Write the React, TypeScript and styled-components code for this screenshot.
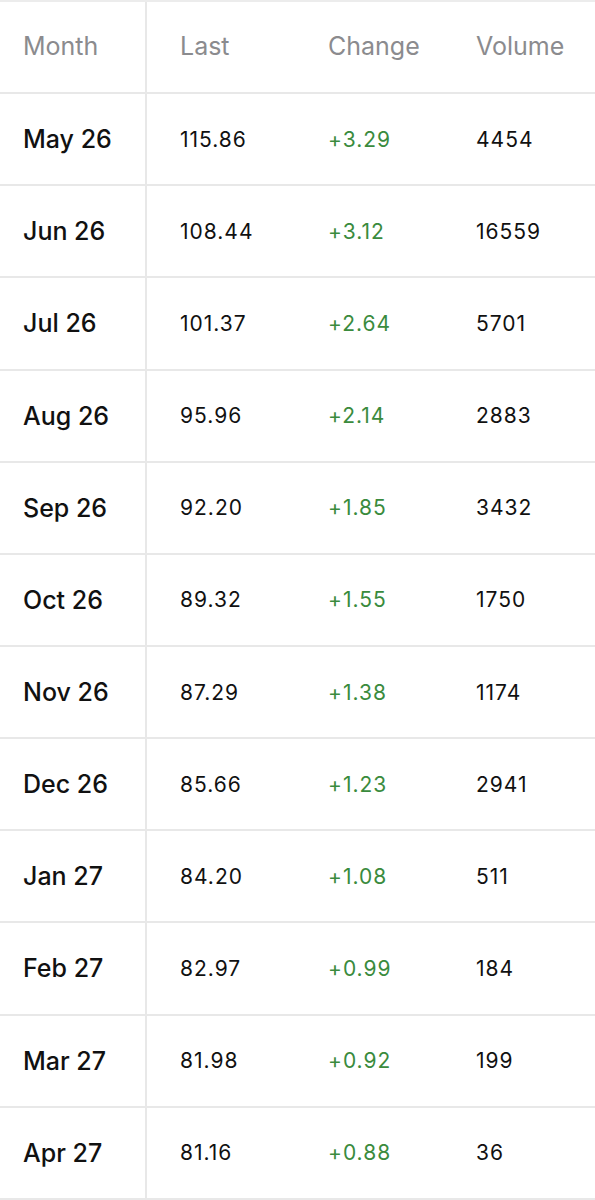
import React from "react";
import styled, { createGlobalStyle } from "styled-components";

const GlobalStyle = createGlobalStyle`
  body {
    margin: 0;
    background: #ffffff;
    font-family: Inter, "Liberation Sans", sans-serif;
  }
`;

const Table = styled.div`
  width: 595px;
  border-top: 2px solid #ececec;
`;

const Row = styled.div`
  display: grid;
  grid-template-columns: 147px 148px 148px 1fr;
  height: 92.15px;
  box-sizing: border-box;
  border-bottom: 2px solid #e8e8e8;
`;

const Cell = styled.div<{ $first?: boolean; $head?: boolean; $green?: boolean }>`
  display: flex;
  align-items: center;
  box-sizing: border-box;
  padding-left: ${(p) => (p.$first ? "23px" : "33px")};
  padding-bottom: ${(p) => (p.$head ? "2px" : "0")};
  border-right: ${(p) => (p.$first ? "2px solid #e8e8e8" : "none")};
  font-size: ${(p) => (p.$head ? "25px" : p.$first ? "25px" : "21px")};
  letter-spacing: ${(p) => (p.$head || p.$first ? "0" : "1px")};
  font-weight: ${(p) => (p.$first && !p.$head ? 500 : 400)};
  color: ${(p) => (p.$head ? "#8b8b8e" : p.$green ? "#3a8b3d" : "#111111")};
  white-space: nowrap;
`;

const rows: [string, string, string, string][] = [
  ["May 26", "115.86", "+3.29", "4454"],
  ["Jun 26", "108.44", "+3.12", "16559"],
  ["Jul 26", "101.37", "+2.64", "5701"],
  ["Aug 26", "95.96", "+2.14", "2883"],
  ["Sep 26", "92.20", "+1.85", "3432"],
  ["Oct 26", "89.32", "+1.55", "1750"],
  ["Nov 26", "87.29", "+1.38", "1174"],
  ["Dec 26", "85.66", "+1.23", "2941"],
  ["Jan 27", "84.20", "+1.08", "511"],
  ["Feb 27", "82.97", "+0.99", "184"],
  ["Mar 27", "81.98", "+0.92", "199"],
  ["Apr 27", "81.16", "+0.88", "36"],
];

export default function App() {
  return (
    <>
      <GlobalStyle />
      <Table>
        <Row>
          <Cell $first $head>Month</Cell>
          <Cell $head>Last</Cell>
          <Cell $head>Change</Cell>
          <Cell $head>Volume</Cell>
        </Row>
        {rows.map((r) => (
          <Row key={r[0]}>
            <Cell $first>{r[0]}</Cell>
            <Cell>{r[1]}</Cell>
            <Cell $green>{r[2]}</Cell>
            <Cell>{r[3]}</Cell>
          </Row>
        ))}
      </Table>
    </>
  );
}
